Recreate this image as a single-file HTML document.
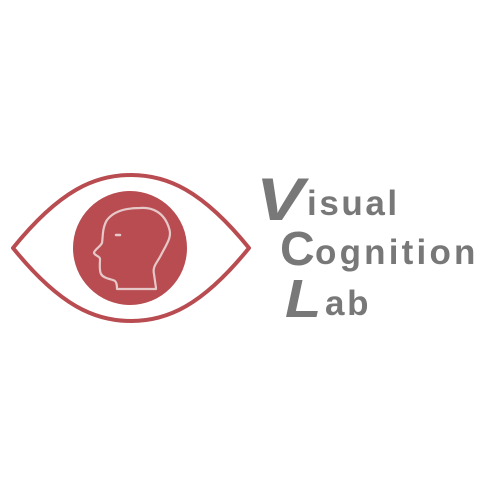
<!DOCTYPE html>
<html><head><style>
html,body{margin:0;padding:0;background:#fff;width:500px;height:500px;overflow:hidden}
.t{position:absolute;font-family:"Liberation Sans",sans-serif;font-weight:bold;color:#787878;line-height:1;white-space:nowrap;transform-origin:0 0}
</style></head><body>
<svg width="500" height="500" style="position:absolute;left:0;top:0">
<path d="M13 248 C60 190 95 175 131 175 C167 175 202 190 249 248 C202 306 167 321 131 321 C95 321 60 306 13 248 Z" fill="none" stroke="#b84c50" stroke-width="4" stroke-linejoin="round"/>
<circle cx="130" cy="248" r="57" fill="#b84c50"/>
<path d="M156 288 L154 274 C152 266 158 262 162 253 C168 242 172 236 169 228 C164 212 152 207 140 208 C126 208 114 211 107 220 C102 228 103 238 102 243 C100 247 94 250 94 253 C95 256 100 256 100 259 C100 264 99 270 101 274 C104 279 112 279 115 281 C117 283 117 286 117 289 L156 289" fill="none" stroke="#e6c8c8" stroke-width="2.2" stroke-linejoin="round" stroke-linecap="round"/>
<path d="M116 235 L120 235" stroke="#e6c8c8" stroke-width="2.5" stroke-linecap="round"/>
</svg>
<div class="t" style="left:256px;top:170px;font-size:60px;font-style:italic;transform:scaleX(1.2)">V</div>
<div class="t" style="left:307px;top:186px;font-size:35px;letter-spacing:2.6px">isual</div>
<div class="t" style="left:280px;top:226px;font-size:48px">C</div>
<div class="t" style="left:315px;top:235px;font-size:35px;letter-spacing:3.2px">ognition</div>
<div class="t" style="left:285px;top:272px;font-size:54px;font-style:italic;transform:scaleX(1.1)">L</div>
<div class="t" style="left:325px;top:286px;font-size:35px;letter-spacing:2.6px">ab</div>
</body></html>
